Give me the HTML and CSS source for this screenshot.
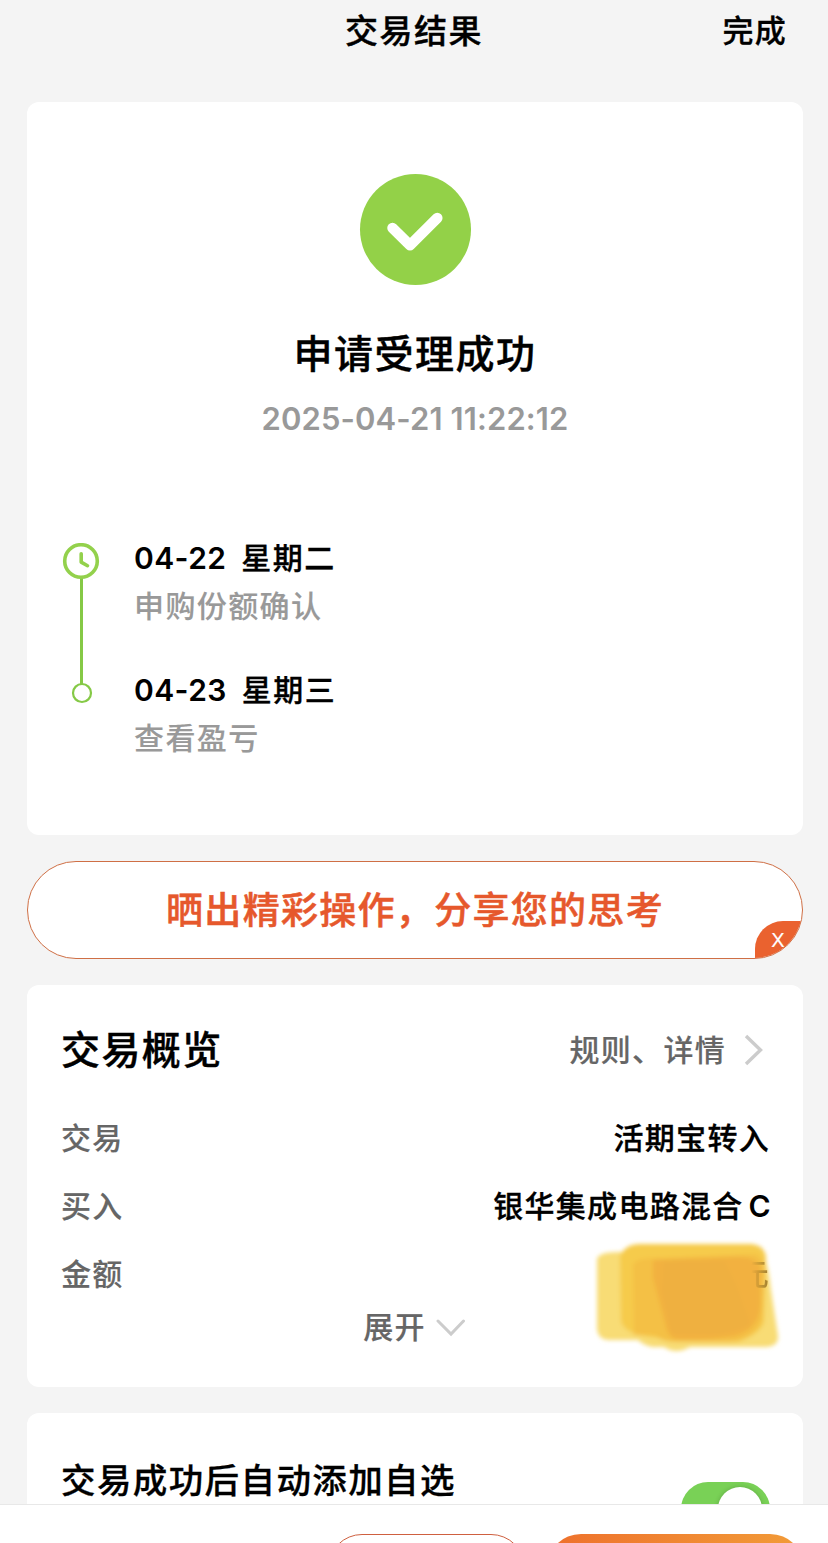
FILE: index.html
```html
<!DOCTYPE html>
<html lang="zh-CN">
<head>
<meta charset="utf-8">
<title>交易结果</title>
<link rel="stylesheet" href="styles.css">
</head>
<body>
<header class="nav">
  <h1 class="nav-title">交易结果</h1>
  <span class="nav-done">完成</span>
</header>
<main class="content">
  <section class="card result">
    <svg class="result-icon" width="112" height="112" viewBox="0 0 112 112">
      <circle cx="56.5" cy="55.5" r="55.5" fill="#93d148"/>
      <path d="M33.5 54 L51 71.2 L78.3 44" fill="none" stroke="#fff" stroke-width="10.5" stroke-linecap="round" stroke-linejoin="round"/>
    </svg>
    <h2 class="result-title">申请受理成功</h2>
    <p class="result-time">2025-04-21 11:22:12</p>
    <div class="timeline">
      <svg class="track" width="38" height="162" viewBox="0 0 38 162">
        <path d="M19.5 35V142" stroke="#85c946" stroke-width="3"/>
        <circle cx="19" cy="18" r="16.3" fill="#fff" stroke="#93d14c" stroke-width="3.6"/>
        <path d="M19.2 10.8V19.1L25.5 22.7" fill="none" stroke="#93d14c" stroke-width="3.6" stroke-linecap="round" stroke-linejoin="round"/>
        <circle cx="20" cy="150" r="9" fill="#fff" stroke="#85c946" stroke-width="2.2"/>
      </svg>
      <div class="steps">
        <div class="step">
          <p class="step-date"><span class="num">04-22</span><span>星期二</span></p>
          <p class="step-text">申购份额确认</p>
        </div>
        <div class="step">
          <p class="step-date"><span class="num">04-23</span><span>星期三</span></p>
          <p class="step-text">查看盈亏</p>
        </div>
      </div>
    </div>
  </section>

  <section class="share">
    <span class="share-text">晒出精彩操作，分享您的思考</span>
    <span class="share-close">X</span>
  </section>

  <section class="card overview">
    <div class="overview-head">
      <h3 class="overview-title">交易概览</h3>
      <span class="overview-link">规则、详情
        <svg width="20" height="36" viewBox="0 0 20 36"><path d="M2 6L16.500 20L2 34" fill="none" stroke="#ccc" stroke-width="3.4"/></svg>
      </span>
    </div>
    <div class="row"><span class="label">交易</span><span class="value">活期宝转入</span></div>
    <div class="row"><span class="label">买入</span><span class="value">银华集成电路混合<span class="latin">C</span></span></div>
    <div class="row">
      <span class="label">金额</span>
      <span class="value amount">
        <svg class="marker" width="204" height="130" viewBox="586 1234 204 130">
          <defs><filter id="soft"><feGaussianBlur stdDeviation="2"/></filter></defs>
          <g filter="url(#soft)">
            <path d="M597 1259Q599 1252 618 1252H762Q768 1262 771 1290L778 1336Q779 1346 767 1347H690Q676 1355 664 1347H652Q643 1345 638 1340H608Q597 1339 597 1327Z" fill="#f8dc74"/>
            <path d="M620 1256Q625 1244 640 1244H752Q765 1246 766 1257L764 1322Q760 1334 738 1342L655 1338Q622 1334 621 1320Z" fill="#f6cb4c"/>
            <path d="M633 1265Q635 1257 662 1258L755 1254Q765 1258 765 1275L762 1320Q755 1338 732 1342H675Q660 1341 655 1335H634Z" fill="#f4c044"/>
            <path d="M653 1260L736 1257Q756 1256 761 1268L760 1310Q756 1330 735 1336Q705 1341 675 1339Q667 1336 665 1322L653 1278Z" fill="#f2b140"/>
            <path d="M664 1261H724L737 1288L750 1325L722 1334H672L662 1290Z" fill="#efb040"/>
          </g>
        </svg>
        <span class="unit">元</span>
      </span>
    </div>
    <div class="expand">展开
      <svg width="30" height="24" viewBox="0 0 30 24"><path d="M2 8L15 21L27.500 8" fill="none" stroke="#ccc" stroke-width="3" stroke-linecap="round"/></svg>
    </div>
  </section>

  <section class="card auto-add">
    <span class="auto-text">交易成功后自动添加自选</span>
    <span class="switch"><span class="knob"></span></span>
  </section>
</main>
<footer class="actions">
  <span class="btn btn-outline"></span>
  <span class="btn btn-solid"></span>
</footer>
</body>
</html>
```
FILE: styles.css
```css
* { box-sizing: border-box; }
html, body { height: 100%; }
body {
  margin: 0;
  display: flex;
  flex-direction: column;
  overflow: hidden;
  background: #f4f4f4;
  color: #000;
  font-family: Inter, "Noto Sans CJK SC", sans-serif;
  font-weight: 500;
  font-size: 30px;
  letter-spacing: 1.3px;
  white-space: nowrap;
  -webkit-text-stroke: 0.15px currentColor;
}
h1, h2, h3, p { margin: 0; font-weight: 500; }

.nav {
  flex: none;
  height: 102px;
  padding: 2px 41px 0 0;
  display: grid;
  grid-template-columns: 345px 1fr auto;
  line-height: 58px;
}
.nav-title { grid-column: 2; font-size: 33px; letter-spacing: 1.5px; -webkit-text-stroke-width: 0.4px; }
.nav-done { font-size: 31px; -webkit-text-stroke-width: 0.3px; }

.content {
  flex: 1;
  min-height: 0;
  overflow: hidden;
  padding: 0 25px 0 27px;
}
.card { background: #fff; border-radius: 12px; }

.result { height: 733px; padding-top: 72px; text-align: center; }
.result-icon { display: block; margin: 0 auto; }
.result-title {
  margin-top: 38px;
  font-size: 39px;
  letter-spacing: 1.5px;
  line-height: 60px;
  -webkit-text-stroke-width: 0.4px;
}
.result-time {
  margin-top: 14px;
  color: #999;
  font-size: 31px;
  font-weight: 600;
  letter-spacing: 0.1px;
  line-height: 42px;
  -webkit-text-stroke-width: 0;
}
.timeline { display: flex; gap: 34px; margin-top: 100px; padding-left: 35px; text-align: left; }
.track { margin-top: 3px; }
.steps { display: flex; flex-direction: column; gap: 36px; }
.step-date { display: flex; gap: 15px; line-height: 36px; letter-spacing: 1.5px; -webkit-text-stroke-width: 0.3px; }
.num { font-weight: 600; letter-spacing: 0.4px; -webkit-text-stroke-width: 0; }
.step-text { color: #999; line-height: 40px; margin-top: 10px; letter-spacing: 1.4px; }
.step { height: 96px; }

.share {
  position: relative;
  height: 98px;
  margin: 26px 0;
  border: 1px solid #cf6f45;
  border-radius: 49px;
  overflow: hidden;
  background: #fff;
  color: #e6582c;
  font-size: 37px;
  line-height: 98px;
  text-align: center;
}
.share-text { -webkit-text-stroke-width: 0.5px; }
.share-close {
  position: absolute;
  right: 0;
  bottom: 0;
  width: 47px;
  height: 37px;
  border-radius: 28px 0 0 0;
  background: #ea622f;
  color: #fff;
  font: 20px/38px "Liberation Sans", sans-serif;
}

.overview { height: 402px; padding: 32px 33px 0 34px; }
.overview-head { display: flex; justify-content: space-between; align-items: center; height: 60px; }
.overview-title { font-size: 39px; letter-spacing: 1.4px; -webkit-text-stroke-width: 0.4px; }
.overview-link { display: flex; align-items: center; gap: 18px; padding-top: 1px; padding-right: 6px; color: #666; }
.row { display: flex; justify-content: space-between; height: 68px; line-height: 68px; }
.overview-head + .row { margin-top: 27px; }
.label { color: #666; }
.value { -webkit-text-stroke-width: 0.3px; }
.latin { margin-left: 5px; margin-right: -2px; font-weight: 600; -webkit-text-stroke-width: 0; }
.amount { position: relative; }
.marker { position: absolute; right: -20px; top: -6px; }
.unit {
  position: relative;
  background: linear-gradient(90deg, transparent 40%, #a07a28 95%);
  background-clip: text;
  -webkit-background-clip: text;
  color: transparent;
  -webkit-text-stroke-width: 0;
}
.expand {
  display: flex;
  justify-content: center;
  align-items: center;
  gap: 10px;
  height: 34px;
  padding-right: 2px;
  color: #666;
}

.auto-add {
  display: flex;
  justify-content: space-between;
  height: 180px;
  margin-top: 26px;
  padding: 37px 33px 0 34px;
}
.auto-text { font-size: 34.5px; line-height: 61px; letter-spacing: 1.4px; -webkit-text-stroke-width: 0.3px; }
.switch {
  width: 89px;
  height: 54px;
  margin-top: 32px;
  padding: 5px 8px;
  border-radius: 27px;
  background: #79d156;
}
.knob {
  display: block;
  width: 44px;
  height: 44px;
  margin-left: auto;
  border-radius: 50%;
  background: #fff;
  box-shadow: 0 0 5px rgba(0, 0, 0, 0.2);
}

.actions {
  flex: none;
  display: flex;
  justify-content: flex-end;
  gap: 22px;
  height: 39px;
  padding: 29px 24px 0 0;
  border-top: 1px solid #e8e8e8;
  background: #fff;
  overflow: hidden;
}
.btn { flex: none; height: 68px; border-radius: 34px; }
.btn-outline { width: 197px; border: 1px solid #cf6040; }
.btn-solid { width: 257px; background: linear-gradient(90deg, #ee702c, #f29c38); }
```
